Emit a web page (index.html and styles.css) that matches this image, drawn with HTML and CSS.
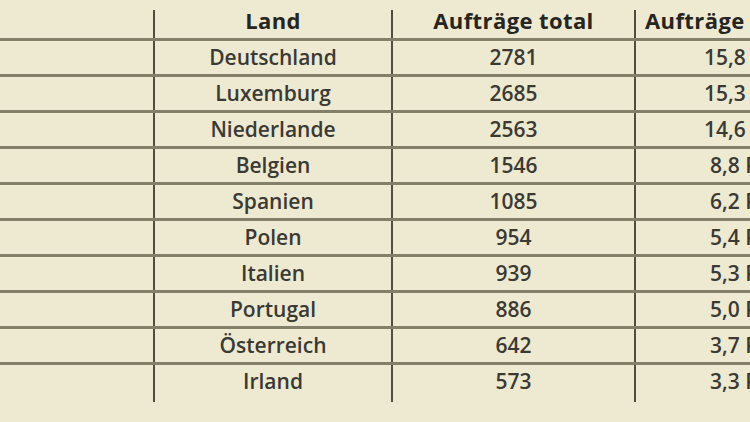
FILE: index.html
```html
<!DOCTYPE html>
<html lang="de">
<head>
<meta charset="utf-8">
<title>Aufträge nach Land</title>
<link rel="stylesheet" href="styles.css">
</head>
<body>
<div class="table">
  <div class="row head">
    <div class="cell"></div>
    <div class="cell">Land</div>
    <div class="cell">Aufträge total</div>
    <div class="cell last">Aufträge in Prozent</div>
  </div>
  <div class="row"><div class="cell"></div><div class="cell">Deutschland</div><div class="cell">2781</div><div class="cell last">15,8 Prozent</div></div>
  <div class="row"><div class="cell"></div><div class="cell">Luxemburg</div><div class="cell">2685</div><div class="cell last">15,3 Prozent</div></div>
  <div class="row"><div class="cell"></div><div class="cell">Niederlande</div><div class="cell">2563</div><div class="cell last">14,6 Prozent</div></div>
  <div class="row"><div class="cell"></div><div class="cell">Belgien</div><div class="cell">1546</div><div class="cell last">8,8 Prozent</div></div>
  <div class="row"><div class="cell"></div><div class="cell">Spanien</div><div class="cell">1085</div><div class="cell last">6,2 Prozent</div></div>
  <div class="row"><div class="cell"></div><div class="cell">Polen</div><div class="cell">954</div><div class="cell last">5,4 Prozent</div></div>
  <div class="row"><div class="cell"></div><div class="cell">Italien</div><div class="cell">939</div><div class="cell last">5,3 Prozent</div></div>
  <div class="row"><div class="cell"></div><div class="cell">Portugal</div><div class="cell">886</div><div class="cell last">5,0 Prozent</div></div>
  <div class="row"><div class="cell"></div><div class="cell">Österreich</div><div class="cell">642</div><div class="cell last">3,7 Prozent</div></div>
  <div class="row final"><div class="cell"></div><div class="cell">Irland</div><div class="cell">573</div><div class="cell last">3,3 Prozent</div></div>
</div>
</body>
</html>
```
FILE: styles.css
```css
html, body {
  margin: 0;
  padding: 0;
  background: #eeead1;
  overflow: hidden;
  width: 750px;
  height: 422px;
}

body {
  font-family: "Open Sans", "Noto Sans", sans-serif;
  color: #3a3934;
}

.table {
  margin-top: 10px;
  width: 890px;
}

.row {
  display: grid;
  grid-template-columns: 155px 238px 243px 254px;
  height: 33px;
  border-top: 3px solid #838069;
  font-size: 21px;
  font-weight: 600;
  line-height: 33px;
  text-align: center;
}

.row.head {
  border-top: none;
  height: 28px;
  font-size: 22px;
  font-weight: 700;
  line-height: 20px;
  letter-spacing: 0.4px;
  color: #26251f;
}

.row.final {
  height: 37px;
}

.cell {
  border-right: 2px solid #4f4d42;
  white-space: nowrap;
}

.cell.last {
  border-right: none;
}

.row.head .cell.last {
  text-align: left;
  padding-left: 9px;
}

.row .cell.last {
  padding-left: 8px;
}
```
